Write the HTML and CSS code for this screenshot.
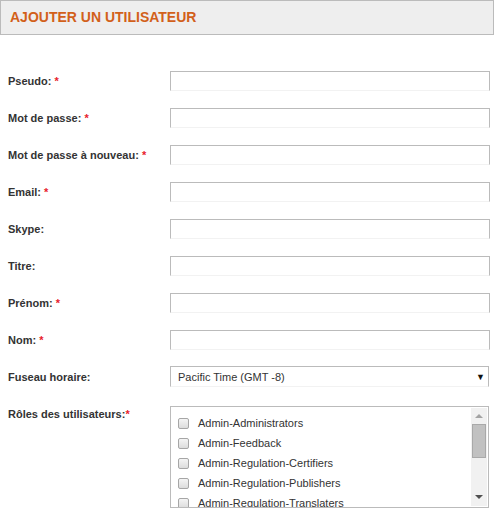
FILE: index.html
```html
<!DOCTYPE html>
<html lang="fr">
<head>
<meta charset="utf-8">
<link rel="stylesheet" href="styles.css">
</head>
<body>
<div class="header"><h1 class="title">Ajouter un utilisateur</h1></div>
<form class="form">
  <div class="row"><label class="lbl">Pseudo: <span class="req">*</span></label><div class="input"></div></div>
  <div class="row"><label class="lbl">Mot de passe: <span class="req">*</span></label><div class="input"></div></div>
  <div class="row"><label class="lbl">Mot de passe à nouveau: <span class="req">*</span></label><div class="input"></div></div>
  <div class="row"><label class="lbl">Email: <span class="req">*</span></label><div class="input"></div></div>
  <div class="row"><label class="lbl">Skype:</label><div class="input"></div></div>
  <div class="row"><label class="lbl">Titre:</label><div class="input"></div></div>
  <div class="row"><label class="lbl">Prénom: <span class="req">*</span></label><div class="input"></div></div>
  <div class="row"><label class="lbl">Nom: <span class="req">*</span></label><div class="input"></div></div>
  <div class="row row-select"><label class="lbl">Fuseau horaire:</label><div class="select"><span class="select-text">Pacific Time (GMT -8)</span><span class="select-arrow">▼</span></div></div>
  <div class="row row-list"><label class="lbl lbl-top">Rôles des utilisateurs:<span class="req">*</span></label>
    <div class="listbox">
      <ul class="items">
        <li class="item"><span class="cb"></span>Admin-Administrators</li>
        <li class="item"><span class="cb"></span>Admin-Feedback</li>
        <li class="item"><span class="cb"></span>Admin-Regulation-Certifiers</li>
        <li class="item"><span class="cb"></span>Admin-Regulation-Publishers</li>
        <li class="item"><span class="cb"></span>Admin-Regulation-Translaters</li>
      </ul>
      <div class="scrollbar">
        <span class="sb-up"></span>
        <span class="sb-thumb"></span>
        <span class="sb-down"></span>
      </div>
    </div>
  </div>
</form>
</body>
</html>
```
FILE: styles.css
```css
* { box-sizing: border-box; }
html, body { margin: 0; padding: 0; background: #fff; }
body { font-family: "Liberation Sans", Arial, sans-serif; color: #333; width: 494px; height: 511px; overflow: hidden; }

.header {
  height: 35px;
  background: #eeeeee;
  border: 1px solid #bbbbbb;
  padding: 9px 0 0 9px;
}
.title {
  margin: 0;
  font-size: 14px;
  font-weight: bold;
  text-transform: uppercase;
  color: #d2601a;
  line-height: 15px;
}

.form { padding: 36px 0 0 8px; margin: 0; }
.row { display: flex; align-items: center; height: 20px; margin-bottom: 17px; }
.lbl { width: 162px; flex: none; font-size: 11px; font-weight: bold; color: #333; }
.req { color: #e8212b; }

.input {
  width: 320px;
  height: 20px;
  border: 1px solid #bbbbbb;
  border-bottom-color: #f2f2f2;
}

.row-select { height: 21px; margin-top: -1px; margin-bottom: 19px; }
.select {
  width: 319px;
  height: 21px;
  border: 1px solid #bbbbbb;
  border-bottom-color: #f2f2f2;
  display: flex;
  align-items: center;
  justify-content: space-between;
  padding: 0 3px 0 7px;
  font-size: 11px;
  color: #333;
}
.select-arrow { font-size: 9px; color: #111; }

.row-list { align-items: flex-start; height: auto; margin-bottom: 0; }
.lbl-top { padding-top: 2px; }
.listbox {
  width: 319px;
  height: 102px;
  border: 1px solid #bbbbbb;
  display: flex;
  overflow: hidden;
}
.items { flex: 1; list-style: none; margin: 0; padding: 6px 0 0 7px; }
.item { display: flex; align-items: center; height: 20px; font-size: 11px; color: #333; }
.cb {
  width: 11px; height: 11px;
  border: 1px solid #a6a6a6;
  border-radius: 2px;
  background: linear-gradient(#f4f4f4, #dcdcdc);
  margin-right: 9px;
  flex: none;
}
.scrollbar {
  width: 16px;
  margin: 1px 1px 1px 0;
  background: #f1f1f1;
  display: flex;
  flex-direction: column;
  align-items: center;
}
.sb-up {
  width: 0; height: 0;
  margin-top: 6px;
  border-left: 4px solid transparent;
  border-right: 4px solid transparent;
  border-bottom: 4px solid #a3a3a3;
}
.sb-thumb {
  width: 14px;
  height: 34px;
  margin-top: 6px;
  background: #c1c1c1;
  border: 1px solid #a9a9a9;
}
.sb-down {
  width: 0; height: 0;
  margin-top: auto;
  margin-bottom: 7px;
  border-left: 4px solid transparent;
  border-right: 4px solid transparent;
  border-top: 4px solid #505050;
}
```
